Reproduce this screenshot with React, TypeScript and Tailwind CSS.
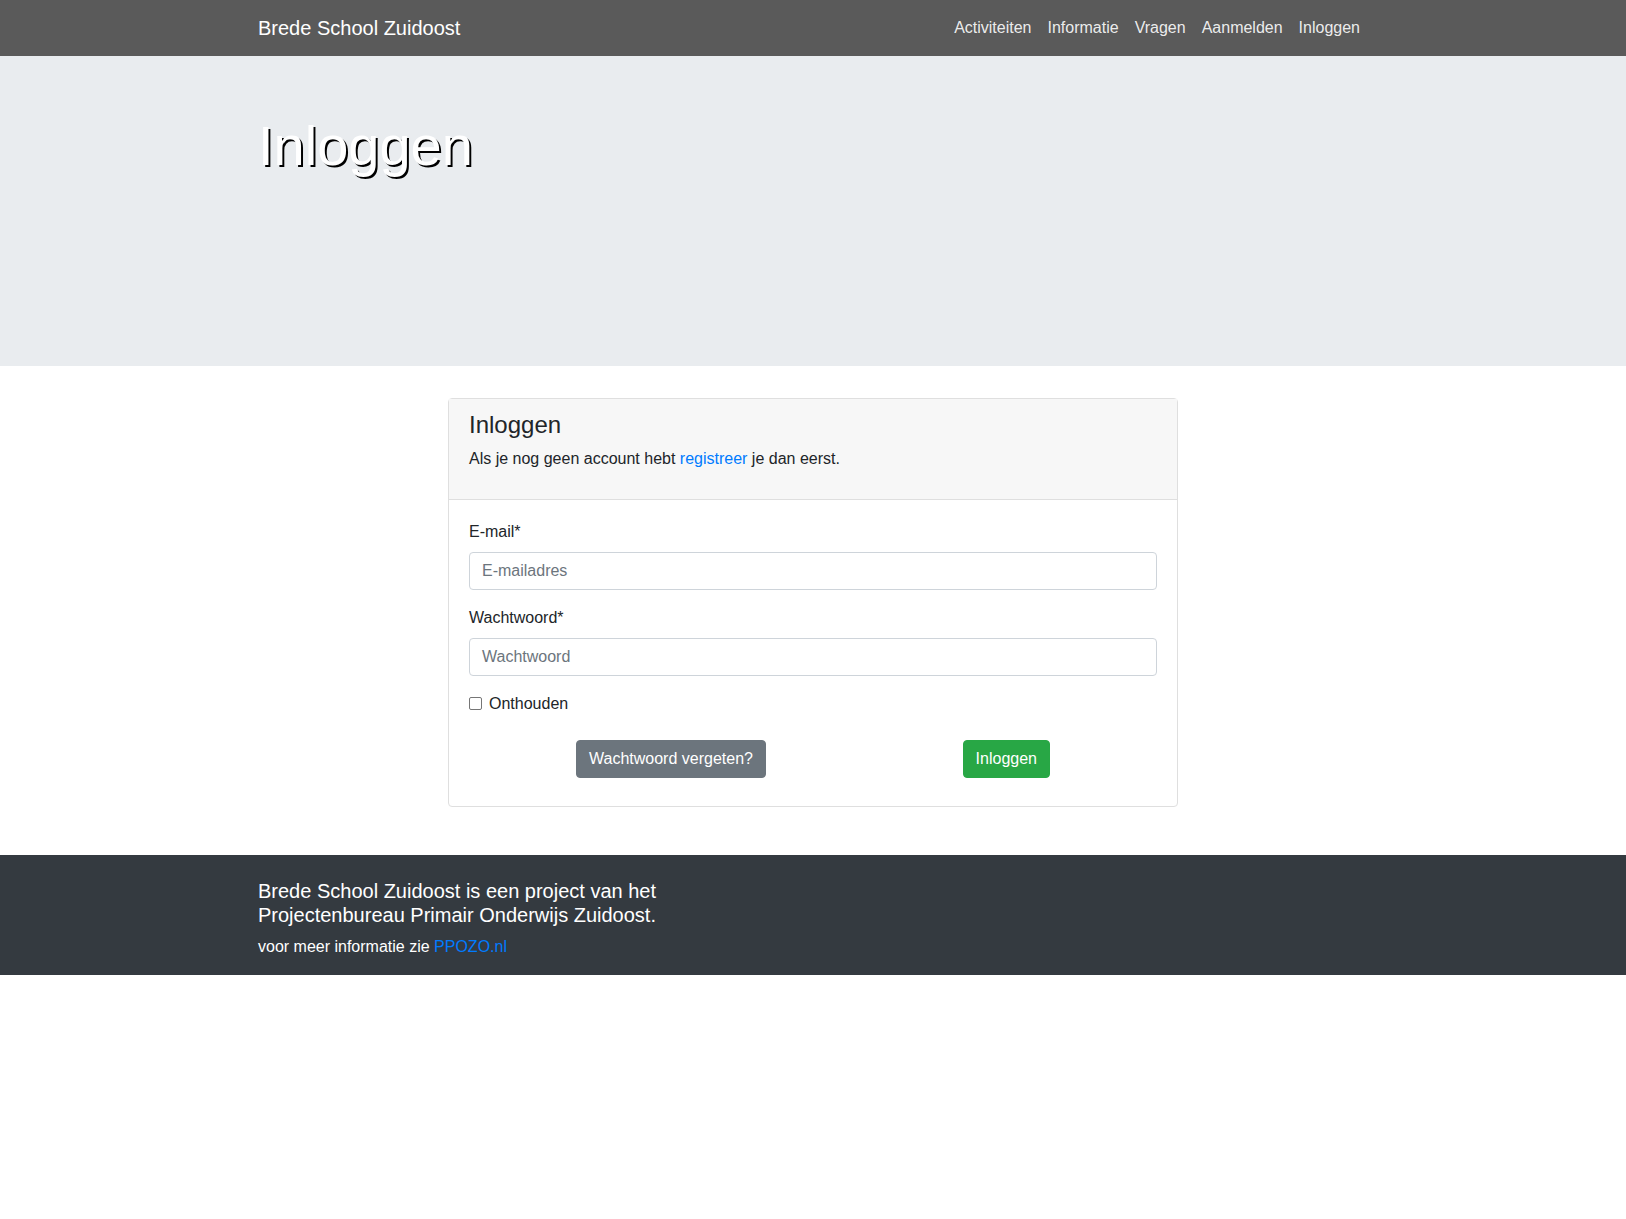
import React from "react";

export default function App() {
  return (
    <div className="min-h-[1219px] bg-white font-['Liberation_Sans',Arial,sans-serif] text-[#212529]">
      <nav className="h-14 bg-[#5a5a5a]">
        <div className="mx-auto flex h-full w-[1140px] items-center justify-between px-[15px]">
          <span className="text-[20px] leading-[30px] text-white">Brede School Zuidoost</span>
          <ul className="flex text-[16px] leading-6 text-[rgba(255,255,255,0.9)]">
            {["Activiteiten", "Informatie", "Vragen", "Aanmelden", "Inloggen"].map((t) => (
              <li key={t} className="px-2 py-2">
                {t}
              </li>
            ))}
          </ul>
        </div>
      </nav>

      <div className="mb-8 h-[310px] bg-[#e9ecef]">
        <div className="mx-auto w-[1140px] px-[15px] pt-[56px]">
          <h1 className="text-[56px] leading-[1.2] text-white [text-shadow:2px_2px_0_#000]">Inloggen</h1>
        </div>
      </div>

      <div className="mx-auto mb-12 w-[730px] rounded border border-[#dfdfdf]">
        <div className="border-b border-[#dfdfdf] bg-[#f7f7f7] px-5 pt-3 pb-3">
          <h4 className="mb-[7px] text-[24px] leading-[1.2]">Inloggen</h4>
          <p className="mb-4 text-[16px] leading-6">
            Als je nog geen account hebt <a className="text-[#007bff]">registreer</a> je dan eerst.
          </p>
        </div>
        <div className="px-5 pt-5 pb-5">
          <label className="mb-2 block text-[16px] leading-6">E-mail*</label>
          <div className="mb-4 flex h-[38px] items-center rounded border border-[#ced4da] px-3 text-[16px] text-[#6c757d]">
            E-mailadres
          </div>
          <label className="mb-2 block text-[16px] leading-6">Wachtwoord*</label>
          <div className="mb-4 flex h-[38px] items-center rounded border border-[#ced4da] px-3 text-[16px] text-[#6c757d]">
            Wachtwoord
          </div>
          <div className="flex h-6 items-center text-[16px] leading-6">
            <span className="mr-[7px] inline-block h-[13px] w-[13px] rounded-[2px] border border-[#767676] bg-white" />
            Onthouden
          </div>
          <div className="mt-6 mb-2 flex justify-between px-[107px]">
            <button className="h-[38px] rounded border border-[#6c757d] bg-[#6c757d] px-3 text-[16px] text-white">
              Wachtwoord vergeten?
            </button>
            <button className="h-[38px] rounded border border-[#28a745] bg-[#28a745] px-3 text-[16px] text-white">
              Inloggen
            </button>
          </div>
        </div>
      </div>

      <footer className="bg-[#343a40] pt-6 pb-4">
        <div className="mx-auto w-[1140px] px-[15px]">
          <h5 className="mb-2 text-[20px] leading-[1.2] text-white">
            Brede School Zuidoost is een project van het
            <br />
            Projectenbureau Primair Onderwijs Zuidoost.
          </h5>
          <p className="text-[16px] leading-6 text-white">
            voor meer informatie zie <a className="text-[#007bff]">PPOZO.nl</a>
          </p>
        </div>
      </footer>
    </div>
  );
}
